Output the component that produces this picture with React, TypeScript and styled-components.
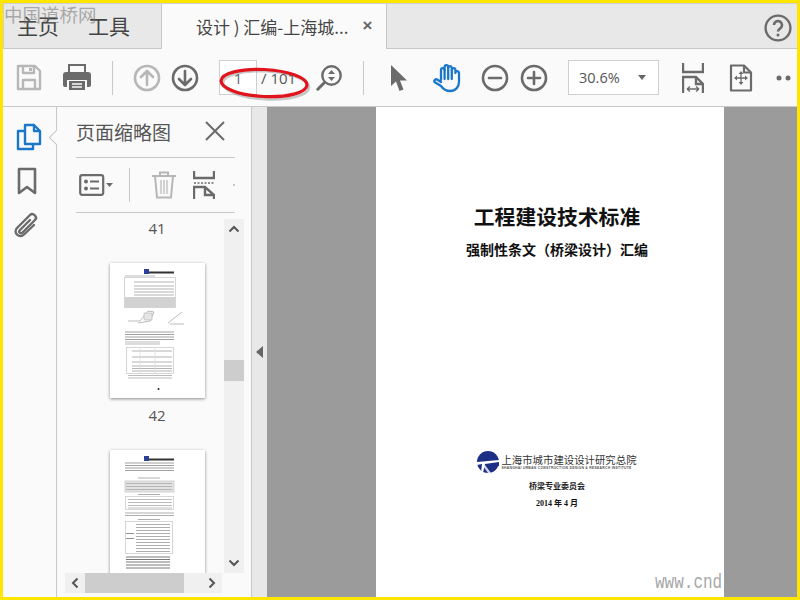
import React from 'react';
import styled, { createGlobalStyle } from 'styled-components';

const Global = createGlobalStyle`
  html, body { margin: 0; padding: 0; background: #ffe600; }
  * { box-sizing: border-box; }
`;

const CJK = `"Noto Sans CJK SC", "Liberation Sans", sans-serif`;

const Frame = styled.div`
  position: relative;
  width: 800px;
  height: 600px;
  border: 3px solid #ffe600;
  display: flex;
  flex-direction: column;
  overflow: hidden;
  background: #fafafa;
  font-family: ${CJK};
  color: #444;
`;

const TabBar = styled.div`
  height: 46px;
  flex: none;
  display: flex;
  align-items: stretch;
  background: #e8e8e8;
  border-top: 1px solid #cfcfcf;
  border-left: 1px solid #cfcfcf;
`;
const HomeTabs = styled.div`
  width: 158px;
  display: flex;
  padding-left: 13px;
  gap: 29px;
  align-items: center;
  font-size: 21px;
  color: #444;
  border-right: 1px solid #c8c8c8;
  border-bottom: 1px solid #c8c8c8;
  padding-bottom: 3px;
`;
const DocTab = styled.div`
  width: 225px;
  display: flex;
  align-items: center;
  background: #fafafa;
  border-right: 1px solid #c8c8c8;
  padding-left: 34px;
  padding-bottom: 1px;
  font-size: 17px;
  color: #444;
  white-space: nowrap;
`;
const TabClose = styled.span`
  margin-left: 14px;
  font-family: "Liberation Sans", sans-serif;
  font-size: 17px;
  font-weight: 700;
  color: #666;
`;
const TabFill = styled.div`
  flex: 1;
  display: flex;
  justify-content: flex-end;
  align-items: center;
  border-bottom: 1px solid #c8c8c8;
  padding-top: 3px;
`;

const Toolbar = styled.div`
  height: 58px;
  flex: none;
  display: flex;
  align-items: center;
  background: #fafafa;
  border-bottom: 1px solid #c8c8c8;
  padding-left: 1px;
  overflow: hidden;
`;
const ToolIcon = styled.div<{ $ml?: number }>`
  width: 38px;
  height: 38px;
  flex: none;
  margin-left: ${p => p.$ml ?? 0}px;
  display: flex;
  align-items: center;
  justify-content: center;
`;
const ToolDivider = styled.div<{ $ml: number }>`
  width: 1px;
  height: 34px;
  flex: none;
  background: #c8c8c8;
  margin-left: ${p => p.$ml}px;
`;
const PageInput = styled.div`
  width: 38px;
  height: 35px;
  flex: none;
  margin-left: 15px;
  border: 1px solid #cfcfcf;
  background: #fff;
  font-size: 15px;
  font-family: "Open Sans", "Liberation Sans", sans-serif;
  display: flex;
  align-items: center;
  justify-content: center;
  color: #666;
`;
const PageTotal = styled.div`
  width: 38px;
  flex: none;
  margin-left: 4px;
  font-size: 15px;
  font-family: "Open Sans", "Liberation Sans", sans-serif;
  color: #555;
  white-space: nowrap;
`;
const ZoomCombo = styled.div`
  width: 91px;
  height: 35px;
  flex: none;
  margin-left: 15px;
  border: 1px solid #cfcfcf;
  background: #fff;
  display: flex;
  align-items: center;
  justify-content: space-between;
  padding: 0 12px 0 10px;
  font-size: 14.5px;
  font-family: "Open Sans", "Liberation Sans", sans-serif;
  color: #555;
`;
const ComboCaret = styled.span`
  width: 0;
  height: 0;
  border-left: 4.5px solid transparent;
  border-right: 4.5px solid transparent;
  border-top: 5px solid #666;
`;

const Main = styled.div`
  flex: 1;
  min-height: 0;
  display: flex;
`;
const Rail = styled.div`
  width: 54px;
  flex: none;
  display: flex;
  flex-direction: column;
  align-items: center;
  padding-top: 15px;
  padding-right: 2px;
  gap: 14px;
  background: #fafafa;
  border-right: 1px solid #c8c8c8;
`;
const RailIcon = styled.div<{ $ml?: number }>`
  width: 30px;
  height: 30px;
  margin-left: ${p => p.$ml ?? 0}px;
  display: flex;
  align-items: center;
  justify-content: center;
`;
const Panel = styled.div`
  position: relative;
  width: 195px;
  flex: none;
  display: flex;
  flex-direction: column;
  background: #fafafa;
  border-right: 1px solid #c8c8c8;
  padding-bottom: 4px;
`;
const PanelNotch = styled.div`
  position: absolute;
  left: -6px;
  top: 25px;
  width: 11px;
  height: 11px;
  transform: rotate(45deg);
  background: #fafafa;
  border-left: 1px solid #c8c8c8;
  border-bottom: 1px solid #c8c8c8;
`;
const PanelHeader = styled.div`
  height: 51px;
  flex: none;
  margin: 0 16px 0 19px;
  padding: 0 9px 2px 0;
  display: flex;
  align-items: center;
  justify-content: space-between;
  border-bottom: 1px solid #c8c8c8;
  font-size: 19px;
  color: #555;
`;
const PanelTools = styled.div`
  height: 55px;
  flex: none;
  margin: 0 16px 0 19px;
  display: flex;
  align-items: center;
  border-bottom: 1px solid #c8c8c8;
`;
const ToolsDivider = styled.div`
  width: 1px;
  height: 34px;
  flex: none;
  background: #c8c8c8;
  margin: 0 21px 0 15px;
`;
const PanelTool = styled.div<{ $w: number; $ml?: number }>`
  width: ${p => p.$w}px;
  flex: none;
  margin-left: ${p => p.$ml ?? 0}px;
  display: flex;
  align-items: center;
  justify-content: center;
`;
const ListRow = styled.div`
  flex: 1;
  min-height: 0;
  display: flex;
  padding: 0 0 0 8px;
`;
const ThumbList = styled.div`
  width: 159px;
  flex: none;
  overflow: hidden;
  padding: 6px 0 0 25px;
  display: flex;
  flex-direction: column;
  align-items: center;
`;
const ThumbItem = styled.div`
  display: flex;
  flex-direction: column;
  align-items: center;
  gap: 8px;
  padding-bottom: 26px;
  flex: none;
`;
const ThumbLabel = styled.div`
  height: 18px;
  line-height: 18px;
  font-size: 15px;
  font-family: "Open Sans", "Liberation Sans", sans-serif;
  color: #555;
`;
const ThumbPage = styled.div`
  width: 95px;
  height: 135px;
  background: #fff;
  box-shadow: 0 1px 3px rgba(0, 0, 0, 0.45);
  flex: none;
`;
const VScroll = styled.div`
  width: 20px;
  flex: none;
  margin-top: 6px;
  background: #f0f0f0;
  display: flex;
  flex-direction: column;
`;
const ScrollBtn = styled.div`
  width: 20px;
  height: 20px;
  flex: none;
  display: flex;
  align-items: center;
  justify-content: center;
`;
const VTrack = styled.div`
  flex: 1;
  padding-top: 121px;
`;
const VThumb = styled.div`
  height: 21px;
  background: #cdcdcd;
`;
const HScroll = styled.div`
  height: 20px;
  flex: none;
  width: 157px;
  margin-left: 8px;
  background: #f0f0f0;
  display: flex;
`;
const HThumb = styled.div`
  width: 99px;
  background: #cdcdcd;
`;
const HSpace = styled.div`
  flex: 1;
`;
const Gutter = styled.div`
  width: 15px;
  flex: none;
  background: #e8e8e8;
  display: flex;
  align-items: center;
  justify-content: center;
`;
const GutterArrow = styled.span`
  width: 0;
  height: 0;
  border-top: 6px solid transparent;
  border-bottom: 6px solid transparent;
  border-right: 7px solid #666;
`;
const Stage = styled.div`
  flex: 1;
  min-width: 0;
  background: #9b9b9b;
  display: flex;
  padding-left: 109px;
`;
const Page = styled.div`
  position: relative;
  width: 348px;
  background: #fff;
  overflow: hidden;
  display: flex;
  flex-direction: column;
  align-items: center;
  color: #111;
  padding: 95px 0 0 14px;
`;
const DocTitle = styled.div`
  font-size: 20.8px;
  line-height: 28px;
  font-weight: 700;
  color: #111;
  white-space: nowrap;
`;
const DocSub = styled.div`
  margin-top: 9px;
  font-size: 14px;
  line-height: 20px;
  font-weight: 700;
  color: #111;
  white-space: nowrap;
`;
const LogoRow = styled.div`
  margin-top: 192px;
  display: flex;
  align-items: center;
  gap: 2px;
  height: 22px;
`;
const LogoText = styled.div`
  display: flex;
  flex-direction: column;
  line-height: 1;
`;
const LogoCn = styled.div`
  font-size: 10.4px;
  line-height: 12px;
  color: #333;
  white-space: nowrap;
`;
const LogoEn = styled.div`
  font-family: "Liberation Sans", sans-serif;
  font-size: 3.4px;
  line-height: 4px;
  font-weight: 700;
  color: #555;
  white-space: nowrap;
  letter-spacing: 0.27px;
`;
const Committee = styled.div`
  margin-top: 7px;
  font-size: 8px;
  line-height: 12px;
  font-weight: 700;
  color: #222;
`;
const DocDate = styled.div`
  margin-top: 6px;
  font-family: "Liberation Serif", "Noto Sans CJK SC", serif;
  font-size: 8px;
  line-height: 12px;
  font-weight: 700;
  color: #111;
  white-space: pre;
`;
const SiteMark = styled.div`
  position: absolute;
  left: 279px;
  bottom: 3px;
  font-family: "Liberation Mono", monospace;
  font-size: 16px;
  line-height: 22px;
  color: #a8a8a8;
  white-space: nowrap;
  transform: scaleY(1.25);
`;
const CornerMark = styled.div`
  position: absolute;
  left: 1px;
  top: -1px;
  font-family: "Noto Sans CJK SC", serif;
  font-size: 18.5px;
  line-height: 24px;
  color: rgba(110, 110, 110, 0.55);
  white-space: nowrap;
  pointer-events: none;
`;
const Annotation = styled.svg`
  position: absolute;
  left: 212px;
  top: 58px;
  pointer-events: none;
`;

const G = '#6b6b6b';
const D = '#b7b7b7';
const B = '#1b78c8';

const Circle = ({ c, children }: { c: string; children?: React.ReactNode }) => (
  <svg width="28" height="28" viewBox="0 0 28 28" fill="none" stroke={c} strokeWidth="2.6" strokeLinecap="round" strokeLinejoin="round">
    <circle cx="14" cy="14" r="12" />
    {children}
  </svg>
);

const FitWidth = ({ w = 22, h = 30 }: { w?: number; h?: number }) => (
  <svg width={w} height={h} viewBox="0 0 22 30" fill="none" stroke={G} strokeWidth="2.4">
    <path d="M1 0v9h20V0" />
    <path d="M1 30V14h13l7 7v9" />
    <path d="M14 14v7h7" />
    <path d="M5 26h12M5 26l3-2.5M5 26l3 2.5M17 26l-3-2.5M17 26l-3 2.5" strokeWidth="1.3" />
  </svg>
);

const Logo = () => (
  <svg width="22" height="22" viewBox="0 0 22 22">
    <circle cx="11" cy="11" r="11" fill="#1d2f85" />
    <path d="M0 11L22 9v2L8 13 6 22H4L5 13 0 14z" fill="#fff" />
    <path d="M8 14l6 8h-3L6 15z" fill="#fff" opacity="0.8" />
    <path d="M14 12l8 0v3l-6-1z" fill="#1d2f85" />
  </svg>
);

const lines = (ys: number[], x1: number, x2: number, c: string, sw = 0.8) =>
  ys.map((y, i) => <line key={`${y}-${i}`} x1={x1} x2={x2} y1={y} y2={y} stroke={c} strokeWidth={sw} />);

const ThumbHead = () => (
  <>
    <rect x="34" y="6" width="5" height="5" fill="#2a3f95" />
    <rect x="39" y="8.5" width="25" height="2" fill="#333" />
  </>
);

const ThumbOne = () => (
  <svg width="95" height="135" viewBox="0 0 95 135">
    <ThumbHead />
    {lines([13], 15, 45, '#aaa')}
    <rect x="14.5" y="14.5" width="51" height="30" fill="#fff" stroke="#ccc" strokeWidth="0.8" />
    {lines([19, 23, 26, 29, 32], 24, 64, '#a0a0a0')}
    <rect x="15" y="34" width="50" height="10.5" fill="#d2d2d2" />
    <path d="M18 58L30 58 38 48 44 49 40 58 28 60M58 60L68 52 72 49M60 61H74" fill="none" stroke="#aaa" strokeWidth="0.8" />
    <rect x="34" y="50" width="8" height="7" fill="#e6e6e6" stroke="#aaa" strokeWidth="0.5" />
    {lines([69, 71.5, 74, 76.5], 15, 64, '#888')}
    {lines([79, 81], 15, 50, '#aaa')}
    <rect x="16.5" y="84.5" width="47" height="26" fill="#fff" stroke="#ccc" strokeWidth="0.8" />
    {lines([88, 94, 99, 103, 105.5, 108], 22, 62, '#a0a0a0')}
    <line x1="30" x2="30" y1="84" y2="110" stroke="#ddd" strokeWidth="0.8" />
    <line x1="45" x2="45" y1="84" y2="110" stroke="#ddd" strokeWidth="0.8" />
    {lines([112.5, 115], 18, 62, '#aaa')}
    <circle cx="48.5" cy="126" r="1" fill="#222" />
  </svg>
);

const ThumbTwo = () => (
  <svg width="95" height="135" viewBox="0 0 95 135">
    <ThumbHead />
    {lines([13, 15.5, 18, 20.5], 15, 64, '#888')}
    {lines([28], 28, 50, '#999')}
    <rect x="15" y="31" width="49" height="11" fill="#e2e2e2" stroke="#ccc" strokeWidth="0.8" />
    {lines([33.5, 36.5, 39.5], 16, 62, '#aaa')}
    {lines([44.5], 28, 50, '#999')}
    <rect x="15.5" y="46.5" width="48" height="13" fill="#fff" stroke="#ccc" strokeWidth="0.8" />
    {lines([49.5, 52.5, 55.5, 58], 18, 62, '#aaa')}
    {lines([63, 65.5], 15, 64, '#999')}
    {lines([69.5], 28, 50, '#999')}
    <rect x="15.5" y="71.5" width="47" height="32" fill="#fff" stroke="#ccc" strokeWidth="0.8" />
    {lines([74.5, 77.5, 80.5, 83.5, 86.5, 89.5, 92.5, 95.5, 98.5, 101.5], 26, 60, '#999')}
    {lines([83.5, 88.5], 16, 24, '#777')}
    {lines([107, 109.5, 112, 115, 118], 16, 60, '#555')}
  </svg>
);

export default function App() {
  return (
    <Frame>
      <Global />
      <TabBar>
        <HomeTabs>
          <span>主页</span>
          <span>工具</span>
        </HomeTabs>
        <DocTab>
          设计 ) 汇编-上海城...
          <TabClose>×</TabClose>
        </DocTab>
        <TabFill>
          <ToolIcon>
            <svg width="28" height="28" viewBox="0 0 28 28" fill="none" stroke={G} strokeWidth="2.4">
              <circle cx="14" cy="14" r="12.4" />
              <path d="M10 11a4 4 0 1 1 6.5 3.2c-1.5 1-2.5 1.7-2.5 3.3" strokeWidth="2.6" />
              <circle cx="14" cy="21" r="1.5" fill={G} stroke="none" />
            </svg>
          </ToolIcon>
        </TabFill>
      </TabBar>

      <Toolbar>
        <ToolIcon $ml={6}>
          <svg width="26" height="27" viewBox="0 0 26 27" fill="none" stroke={D} strokeWidth="2.4" strokeLinejoin="round">
            <path d="M2 2h17l5 5v18H2z" />
            <path d="M7 2v7h11V2M7 25v-9h12v9" />
            <rect x="13" y="4" width="3" height="3" fill={D} stroke="none" />
          </svg>
        </ToolIcon>
        <ToolIcon $ml={10}>
          <svg width="28" height="27" viewBox="0 0 28 27">
            <path d="M6 1h16v8H6z" fill="none" stroke={G} strokeWidth="2" />
            <path d="M3 8h22a3 3 0 0 1 3 3v10a2 2 0 0 1-2 2h-2v-7H4v7H2a2 2 0 0 1-2-2V11a3 3 0 0 1 3-3z" fill={G} />
            <path d="M6 17h16v9H6z" fill={G} />
            <path d="M9 20h10M9 23h10" stroke="#fafafa" strokeWidth="1.4" />
          </svg>
        </ToolIcon>
        <ToolDivider $ml={16} />
        <ToolIcon $ml={15}>
          <Circle c={D}>
            <path d="M14 21V8M8 13l6-6 6 6" />
          </Circle>
        </ToolIcon>
        <ToolIcon>
          <Circle c={G}>
            <path d="M14 7v13M8 15l6 6 6-6" />
          </Circle>
        </ToolIcon>
        <PageInput>1</PageInput>
        <PageTotal>/ 101</PageTotal>
        <ToolIcon $ml={11}>
          <svg width="26" height="26" viewBox="0 0 26 26" fill="none" stroke={G} strokeWidth="2.4" strokeLinecap="round">
            <circle cx="15.5" cy="10.5" r="9.2" />
            <path d="M8.5 17.5L1.8 24.2" strokeWidth="3" />
            <path d="M12 9l3.5-4 3.5 4zM12 12l3.5 4 3.5-4z" fill={G} stroke="none" />
          </svg>
        </ToolIcon>
        <ToolDivider $ml={15} />
        <ToolIcon $ml={16}>
          <svg width="20" height="28" viewBox="0 0 20 28">
            <path d="M2 1l16 15.5h-7l3.5 9-4 1.5-3.5-9.5L2 22z" fill={G} />
          </svg>
        </ToolIcon>
        <ToolIcon $ml={10}>
          <svg width="30" height="30" viewBox="0 0 30 30" fill="none" stroke={B} strokeWidth="2.3" strokeLinecap="round" strokeLinejoin="round">
            <path d="M9 17V7a1.8 1.8 0 0 1 3.6 0V4a1.8 1.8 0 0 1 3.6 0v1a1.8 1.8 0 0 1 3.6 0v2a1.8 1.8 0 0 1 3.6 0v3a1.8 1.8 0 0 1 3.6 0v9c0 5-3.500 9-9 9-4 0-6.500-1.500-9-5L2.500 19c-1-1.500 1-3.500 3-2.300L9 19" />
            <path d="M12.600 7v9M16.200 5v11M19.800 7v9" />
          </svg>
        </ToolIcon>
        <ToolIcon $ml={10}>
          <Circle c={G}>
            <path d="M8 14h12" />
          </Circle>
        </ToolIcon>
        <ToolIcon $ml={1}>
          <Circle c={G}>
            <path d="M8 14h12M14 8v12" />
          </Circle>
        </ToolIcon>
        <ZoomCombo>
          30.6%
          <ComboCaret />
        </ZoomCombo>
        <ToolIcon $ml={15}>
          <FitWidth />
        </ToolIcon>
        <ToolIcon $ml={10}>
          <svg width="24" height="28" viewBox="0 0 24 28" fill="none" stroke={G} strokeWidth="2.2" strokeLinejoin="round">
            <path d="M2 1.500h13l7 7V26.500H2z" />
            <path d="M15 1.500v7h7" />
            <path d="M12 9v10M7 14h10" strokeWidth="1.300" />
            <path d="M12 7l-2.500 3h5zM12 21l-2.500-3h5zM5 14l3-2.500v5zM19 14l-3-2.500v5z" fill={G} stroke="none" />
          </svg>
        </ToolIcon>
        <ToolIcon $ml={6}>
          <svg width="18" height="6" viewBox="0 0 18 6" fill={G}>
            <circle cx="3" cy="3" r="2.500" />
            <circle cx="12" cy="3" r="2.500" />
          </svg>
        </ToolIcon>
      </Toolbar>

      <Main>
        <Rail>
          <RailIcon>
            <svg width="26" height="28" viewBox="0 0 26 28" fill="none" stroke={B} strokeWidth="2.400" strokeLinejoin="round">
              <path d="M9 2h9l6 6v13H9z" />
              <path d="M18 2v6h6" />
              <path d="M9 8H2v18h15v-5" />
            </svg>
          </RailIcon>
          <RailIcon $ml={-4}>
            <svg width="20" height="28" viewBox="0 0 20 28" fill="none" stroke={G} strokeWidth="2.600" strokeLinejoin="round">
              <path d="M2 2h16v24l-8-6-8 6z" />
            </svg>
          </RailIcon>
          <RailIcon $ml={-5}>
            <svg width="26" height="28" viewBox="0 0 26 28" fill="none" stroke={G} strokeWidth="2.400" strokeLinecap="round">
              <path d="M17 9L7 19c-2 2 .5 4.500 2.500 2.500L22 9c3-3-2-8-5-5L4 17c-4.500 4.500 2.500 11 7 6.500L21 14" />
            </svg>
          </RailIcon>
        </Rail>
        <Panel>
          <PanelNotch />
          <PanelHeader>
            页面缩略图
            <svg width="22" height="22" viewBox="0 0 22 22" stroke={G} strokeWidth="2" fill="none">
              <path d="M2 2l18 18M20 2L2 20" />
            </svg>
          </PanelHeader>
          <PanelTools>
            <PanelTool $w={35} $ml={3}>
              <svg width="35" height="22" viewBox="0 0 35 22" fill="none">
                <rect x="1.200" y="1.200" width="23" height="19.600" rx="2" stroke={G} strokeWidth="2.200" />
                <circle cx="7" cy="7.500" r="2" fill={G} />
                <circle cx="7" cy="14.500" r="2" fill={G} />
                <path d="M11 7.500h9M11 14.500h9" stroke={G} strokeWidth="2" />
                <path d="M27 9h7l-3.500 4z" fill={G} />
              </svg>
            </PanelTool>
            <ToolsDivider />
            <PanelTool $w={26}>
              <svg width="26" height="28" viewBox="0 0 26 28" fill="none" stroke={D} strokeWidth="2">
                <path d="M1 5h24M9 5V1.500h8V5M4 5l2 21.500h14L22 5" />
                <path d="M10 9v14M13 9v14M16 9v14" strokeWidth="1.200" />
              </svg>
            </PanelTool>
            <PanelTool $w={22} $ml={16}>
              <svg width="22" height="28" viewBox="0 0 22 28" fill="none" stroke={G} strokeWidth="2.400">
                <path d="M1 0v7h20V0" />
                <path d="M1 12h20" strokeDasharray="2 1.500" strokeWidth="1.500" />
                <path d="M1 28V16h11l9 8v4M12 16v8h9" />
              </svg>
            </PanelTool>
            <PanelTool $w={4} $ml={17}>
              <svg width="4" height="4" viewBox="0 0 4 4">
                <circle cx="2" cy="2" r="1" fill={D} />
              </svg>
            </PanelTool>
          </PanelTools>
          <ListRow>
            <ThumbList>
              <ThumbItem>
                <ThumbLabel>41</ThumbLabel>
              </ThumbItem>
              <ThumbItem>
                <ThumbPage>
                  <ThumbOne />
                </ThumbPage>
                <ThumbLabel>42</ThumbLabel>
              </ThumbItem>
              <ThumbItem>
                <ThumbPage>
                  <ThumbTwo />
                </ThumbPage>
              </ThumbItem>
            </ThumbList>
            <VScroll>
              <ScrollBtn>
                <svg width="12" height="8" viewBox="0 0 12 8" fill="none" stroke="#555" strokeWidth="2">
                  <path d="M1.500 6.500L6 2l4.500 4.500" />
                </svg>
              </ScrollBtn>
              <VTrack>
                <VThumb />
              </VTrack>
              <ScrollBtn>
                <svg width="12" height="8" viewBox="0 0 12 8" fill="none" stroke="#555" strokeWidth="2">
                  <path d="M1.500 1.500L6 6l4.500-4.500" />
                </svg>
              </ScrollBtn>
            </VScroll>
          </ListRow>
          <HScroll>
            <ScrollBtn>
              <svg width="8" height="12" viewBox="0 0 8 12" fill="none" stroke="#555" strokeWidth="2">
                <path d="M6.500 1.500L2 6l4.500 4.500" />
              </svg>
            </ScrollBtn>
            <HThumb />
            <HSpace />
            <ScrollBtn>
              <svg width="8" height="12" viewBox="0 0 8 12" fill="none" stroke="#555" strokeWidth="2">
                <path d="M1.500 1.500L6 6l-4.500 4.500" />
              </svg>
            </ScrollBtn>
          </HScroll>
        </Panel>
        <Gutter>
          <GutterArrow />
        </Gutter>
        <Stage>
          <Page>
            <DocTitle>工程建设技术标准</DocTitle>
            <DocSub>强制性条文（桥梁设计）汇编</DocSub>
            <LogoRow>
              <Logo />
              <LogoText>
                <LogoCn>上海市城市建设设计研究总院</LogoCn>
                <LogoEn>SHANGHAI URBAN CONSTRUCTION DESIGN &amp; RESEARCH INSTITUTE</LogoEn>
              </LogoText>
            </LogoRow>
            <Committee>桥梁专业委员会</Committee>
            <DocDate>2014 年 4 月</DocDate>
            <SiteMark>www.cnd</SiteMark>
          </Page>
        </Stage>
      </Main>

      <CornerMark>中国道桥网</CornerMark>
      <Annotation width="100" height="44" viewBox="0 0 100 44" fill="none">
        <g transform="rotate(3 49 22)">
          <ellipse cx="51" cy="24" rx="43" ry="14" stroke="#666" strokeWidth="3" opacity="0.35" />
          <ellipse cx="49" cy="22" rx="43" ry="13.500" stroke="#e0141c" strokeWidth="3.200" />
        </g>
      </Annotation>
    </Frame>
  );
}
